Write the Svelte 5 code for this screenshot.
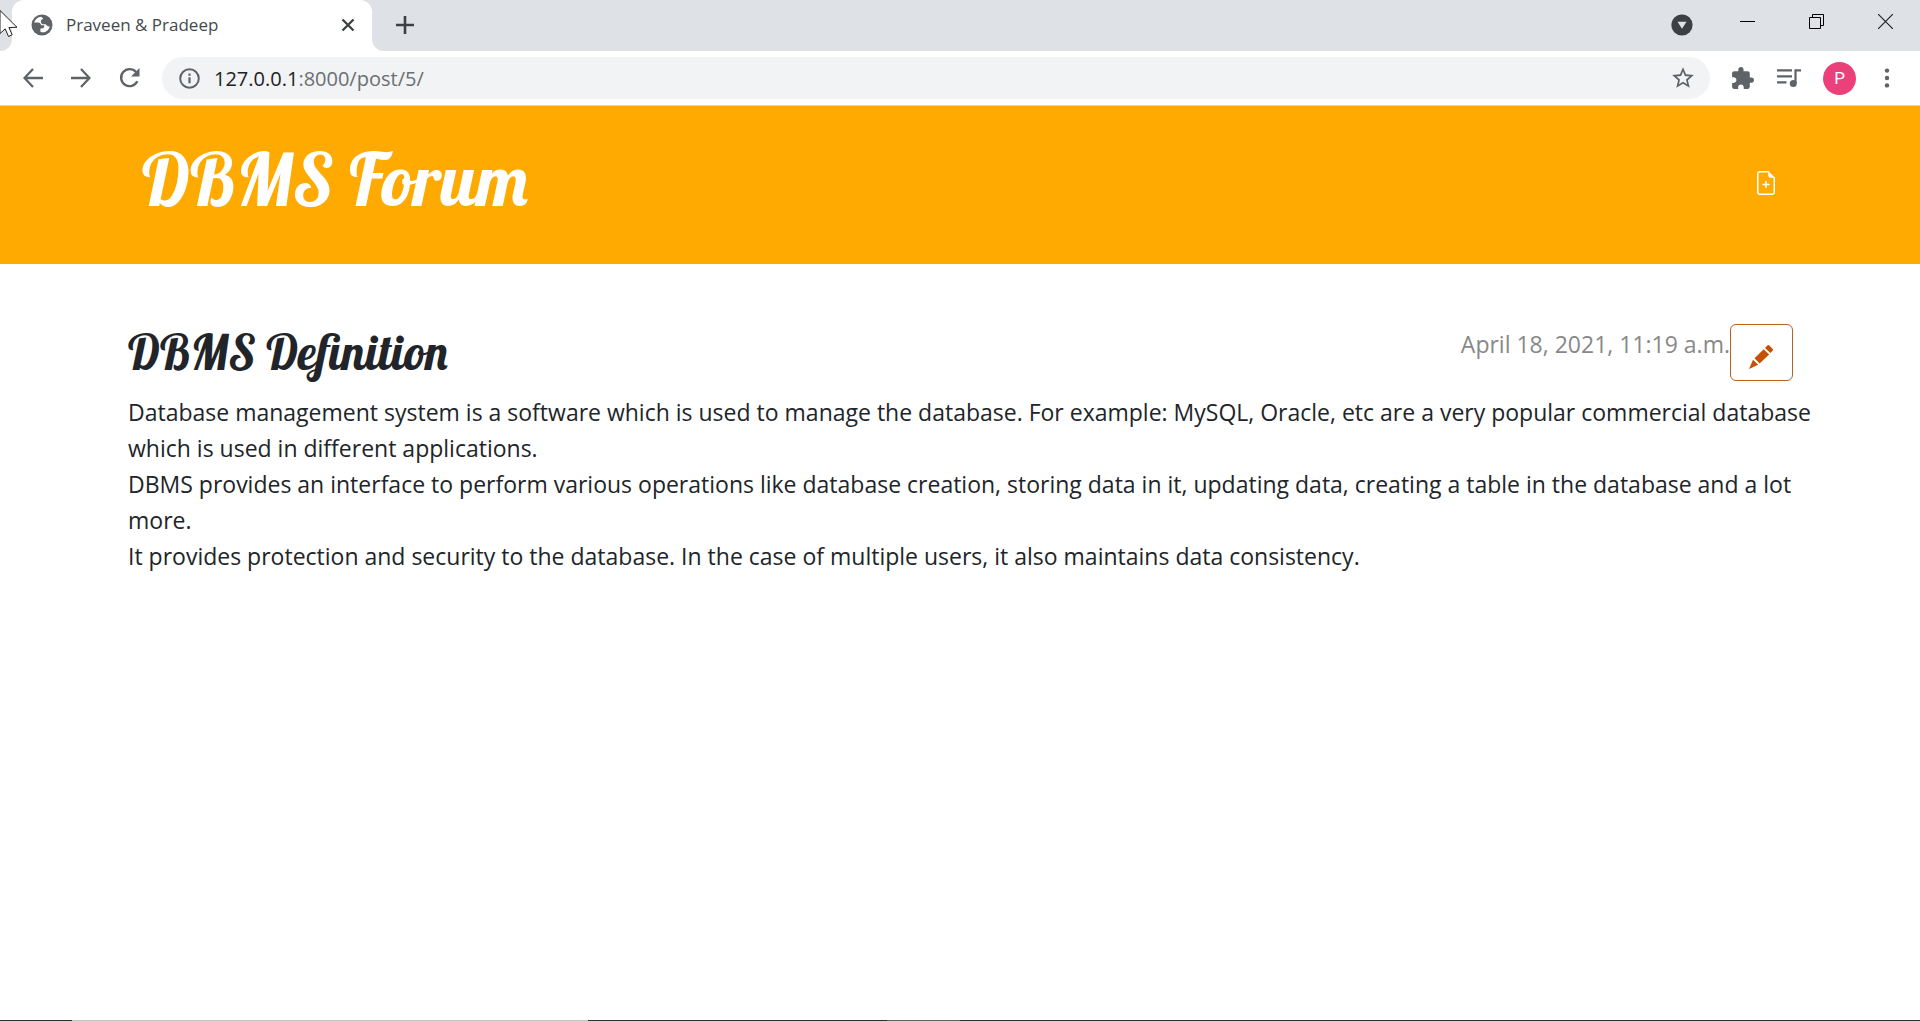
<script>
  const paragraphs = [
    'Database management system is a software which is used to manage the database. For example: MySQL, Oracle, etc are a very popular commercial database which is used in different applications.',
    'DBMS provides an interface to perform various operations like database creation, storing data in it, updating data, creating a table in the database and a lot more.',
    'It provides protection and security to the database. In the case of multiple users, it also maintains data consistency.'
  ];
</script>

<div class="window">
  <div class="tabstrip">
    <div class="previous"></div>
    <div class="tab">
      <svg class="globe" viewBox="0 0 22 22" width="22" height="22">
        <circle cx="11" cy="11" r="10.5" fill="#5f6368" />
        <path d="M10.2 2.700c-3.400.4-6 2.600-7.100 5.700h3.900c1.800 0 3 1.200 3 2.900h3.200c.5 1.800-.5 3.200-2.400 3.200H9.400v3.300c1.400.8 3.500.7 5.200-.1 2.200-1 3.700-3.100 4.300-5.500-1 .6-2.200.3-2.900-.5-.6-1-1.300-1.400-2.900-1.400-2.200 0-3.300-1.300-3.200-2.900.1-1.500 1.200-2.100 2.300-2.300-.4-1-1.100-1.700-2-2.400z" fill="#fff" />
      </svg>
      <span class="tab-title">Praveen &amp; Pradeep</span>
      <button class="icon tab-close" aria-label="Close tab">
        <svg viewBox="0 0 14 14" width="14" height="14"><path d="M1.500 1.500l11 11M12.500 1.500l-11 11" stroke="#3c4043" stroke-width="2.300" /></svg>
      </button>
    </div>
    <div class="strip-rest">
      <button class="icon" aria-label="New tab">
        <svg viewBox="0 0 18 18" width="18" height="18"><path d="M9 0v18M0 9h18" stroke="#3c4043" stroke-width="2.600" /></svg>
      </button>
      <div class="window-controls">
        <button class="icon search-tabs" aria-label="Search tabs">
          <svg viewBox="0 0 22 22" width="22" height="22"><circle cx="11" cy="11" r="10.600" fill="#3c4043" /><path d="M6.500 7.800h9L11 14.700z" fill="#dee1e6" /></svg>
        </button>
        <button class="icon control" aria-label="Minimize">
          <svg viewBox="0 0 15 15" width="15" height="15"><path d="M0 7.500h15" stroke="#000" /></svg>
        </button>
        <button class="icon control" aria-label="Restore">
          <svg viewBox="0 0 15 15" width="15" height="15"><path d="M.5 3.500h11v11H.5zM3.500 3.500v-3h11v11h-3" fill="none" stroke="#000" /></svg>
        </button>
        <button class="icon control" aria-label="Close window">
          <svg viewBox="0 0 15 15" width="15" height="15"><path d="M0 0l15 15M15 0L0 15" stroke="#222" stroke-width="1.200" /></svg>
        </button>
      </div>
    </div>
  </div>

  <div class="toolbar">
    <nav class="history" aria-label="History">
      <button class="icon" aria-label="Back">
        <svg viewBox="0 0 20 20" width="20" height="20"><path d="M20 10H1.800M10 1L1.500 10l8.500 9" fill="none" stroke="#5f6368" stroke-width="2.300" /></svg>
      </button>
      <button class="icon" aria-label="Forward">
        <svg viewBox="0 0 20 20" width="20" height="20"><path d="M0 10h18.200M10 1l8.500 9-8.500 9" fill="none" stroke="#5f6368" stroke-width="2.300" /></svg>
      </button>
      <button class="icon" aria-label="Reload">
        <svg viewBox="0 0 22 22" width="22" height="22"><path d="M18.300 14.300A8.500 8.500 0 1 1 17 5" fill="none" stroke="#5f6368" stroke-width="2.400" /><path d="M20.500 1v8.500H12z" fill="#5f6368" /></svg>
      </button>
    </nav>
    <div class="address">
      <svg viewBox="0 0 21 21" width="21" height="21"><circle cx="10.500" cy="10.500" r="9.300" fill="none" stroke="#5f6368" stroke-width="2" /><path d="M10.500 9.300v6M10.500 5.500v2.200" stroke="#5f6368" stroke-width="2.200" /></svg>
      <a class="url" href="#post"><span>127.0.0.1</span>:8000/post/5/</a>
      <button class="icon" aria-label="Bookmark this page">
        <svg viewBox="0 0 24 24" width="26" height="26"><path fill="#5f6368" d="M22 9.240l-7.190-.62L12 2 9.190 8.630 2 9.240l5.460 4.730L5.820 21 12 17.270 18.180 21l-1.630-7.030L22 9.240zM12 15.400l-3.760 2.270 1-4.280-3.320-2.880 4.380-.38L12 6.100l1.710 4.040 4.380.38-3.320 2.880 1 4.280L12 15.400z" /></svg>
      </button>
    </div>
    <div class="actions">
      <button class="icon" aria-label="Extensions">
        <svg viewBox="0 0 24 24" width="25" height="25"><path fill="#5f6368" d="M20.500 11H19V7c0-1.100-.9-2-2-2h-4V3.500a2.500 2.500 0 0 0-5 0V5H4c-1.100 0-1.990.9-1.990 2v3.800H3.500c1.490 0 2.700 1.210 2.700 2.700s-1.210 2.700-2.700 2.700H2V20c0 1.100.9 2 2 2h3.800v-1.500c0-1.490 1.210-2.700 2.700-2.700s2.700 1.210 2.700 2.700V22H17c1.100 0 2-.9 2-2v-4h1.500a2.500 2.500 0 0 0 0-5z" /></svg>
      </button>
      <button class="icon" aria-label="Media controls">
        <svg viewBox="0 0 24 20" width="24" height="20"><path d="M0 2.300h15M0 8.300h15M0 14.300h9.500M18.500 15.500V2.300H24" fill="none" stroke="#5f6368" stroke-width="2.200" /><circle cx="16.300" cy="15.600" r="3.500" fill="#5f6368" /></svg>
      </button>
      <button class="avatar" aria-label="Profile">P</button>
      <button class="icon" aria-label="Browser menu">
        <svg viewBox="0 0 6 20" width="6" height="20"><g fill="#5f6368"><circle cx="3" cy="2.600" r="2.200" /><circle cx="3" cy="10" r="2.200" /><circle cx="3" cy="17.400" r="2.200" /></g></svg>
      </button>
    </div>
  </div>

  <header class="banner">
    <h1><a href="#home">DBMS Forum</a></h1>
    <a class="new-post" href="#new" aria-label="New post">
      <svg viewBox="0 0 16 16" width="24" height="24" fill="#fff"><path d="M4 0h6v1H4a1 1 0 0 0-1 1v12a1 1 0 0 0 1 1h8a1 1 0 0 0 1-1V4h1v10a2 2 0 0 1-2 2H4a2 2 0 0 1-2-2V2a2 2 0 0 1 2-2z" /><path d="M9.500 3V0L14 4.500h-3A1.500 1.500 0 0 1 9.500 3z" /><path d="M8 6.500a.5.5 0 0 1 .5.5v1.500H10a.5.5 0 0 1 0 1H8.500V11a.5.5 0 0 1-1 0V9.500H6a.5.5 0 0 1 0-1h1.500V7a.5.5 0 0 1 .5-.5z" /></svg>
    </a>
  </header>

  <main id="post">
    <div class="post-head">
      <h2>DBMS Definition</h2>
      <time datetime="2021-04-18T11:19">April 18, 2021, 11:19 a.m.</time>
      <button class="edit" aria-label="Edit post">
        <svg viewBox="0 0 24 24" width="24" height="24" fill="#c65102"><path d="M0 24l4-9.200 5.200 5zM5.500 13.300L14.700 4.200l5.400 5.200-9.500 9.200zM16 2.900L18.300.6a1.500 1.500 0 0 1 2.100 0l3.100 3.100a1.500 1.500 0 0 1 0 2.100l-2.100 2.300z" /></svg>
      </button>
    </div>
    {#each paragraphs as text}
      <p>{text}</p>
    {/each}
  </main>

  <div class="edge"><i></i><i></i><i></i><i></i><i></i></div>
  <svg class="pointer" viewBox="0 0 19 28" width="19" height="28"><path d="M0 .5v23l5.200-4.600 3.300 7.600 3.700-1.700-3.300-7.300 8.100-.2z" fill="#fff" stroke="#222" /></svg>
</div>

<style>
  :global(body) { margin: 0; background: #fff; }
  .window {
    position: relative;
    display: flex;
    flex-direction: column;
    min-height: 100vh;
    font-family: "Open Sans", "Noto Sans", sans-serif;
    color: #212529;
  }
  button { font-family: inherit; cursor: pointer; }
  .icon { display: flex; align-items: center; justify-content: center; padding: 0; border: 0; background: none; }
  svg { display: block; flex: none; }

  .tabstrip { display: flex; height: 51px; }
  .previous { width: 12px; background: #dee1e6; border-bottom-right-radius: 12px; }
  .tab {
    display: flex;
    align-items: center;
    box-sizing: border-box;
    width: 360px;
    padding: 0 17px 2px 19px;
    background: linear-gradient(#dee1e6, #dee1e6) top / 100% 12px no-repeat;
    position: relative;
    isolation: isolate;
  }
  .tab::before { content: ""; position: absolute; inset: 0; z-index: -1; background: #fff; border-radius: 12px 12px 0 0; }
  .tab-title { flex: 1; margin-left: 13px; font-size: 17px; color: #45494d; }
  .strip-rest {
    display: flex;
    flex: 1;
    align-items: center;
    justify-content: space-between;
    padding: 0 0 2px 24px;
    background: #dee1e6;
    border-bottom-left-radius: 12px;
  }
  .window-controls { display: flex; align-items: center; }
  .search-tabs { margin-right: 20px; }
  .control { width: 69px; height: 44px; padding-bottom: 6px; }

  .toolbar {
    display: flex;
    align-items: center;
    box-sizing: border-box;
    height: 55px;
    padding: 0 30px 0 23px;
    border-bottom: 1px solid #d5d6d8;
  }
  .history { display: flex; align-items: center; gap: 28px; width: 139px; }
  .address {
    display: flex;
    flex: 1;
    align-items: center;
    box-sizing: border-box;
    height: 42px;
    padding: 0 14px 0 17px;
    border-radius: 21px;
    background: #f1f3f4;
  }
  .url { flex: 1; margin-left: 14px; font-size: 20px; color: #6b6f74; text-decoration: none; }
  .url span { color: #202124; }
  .actions { display: flex; align-items: center; gap: 22px; margin-left: 20px; }
  .avatar { width: 33px; height: 33px; padding: 0; border: 0; border-radius: 50%; background: #ec407a; color: #fff; font: 17px Roboto, sans-serif; }
  .actions .icon:last-child { margin-left: 6px; }

  .banner {
    display: flex;
    align-items: center;
    justify-content: space-between;
    box-sizing: border-box;
    height: 158px;
    padding: 0 142px 4px;
    background: #ffaa00;
  }
  h1, h2 { margin: 0; font-family: Lobster, "Liberation Serif", serif; font-weight: 500; }
  h1 { font-size: 72px; line-height: 86px; padding-bottom: 8px; }
  h1 a { color: #fff; text-decoration: none; }

  main { flex: 1; padding: 60px 103px 0 128px; }
  .post-head { display: flex; align-items: flex-start; margin: 0 24px 13px 0; }
  h2 { flex: 1; font-size: 48px; line-height: 56px; }
  time { font-size: 23px; line-height: 40px; color: #888; }
  .edit { display: flex; align-items: center; justify-content: center; width: 63px; height: 57px; padding: 8px 2px 0 0; border: 1px solid #b8611b; border-radius: 6px; background: #fff; }
  p { margin: 0; font-size: 23px; line-height: 36px; }

  .edge { display: grid; grid-template-columns: 72fr 516fr 299fr 73fr 960fr; height: 1px; }
  .edge i { background: #263238; }
  .edge i:nth-child(2) { background: #c4c4c4; }
  .edge i:nth-child(4) { background: #5d6462; }
  .pointer { position: absolute; left: 0; top: 10px; }
</style>
